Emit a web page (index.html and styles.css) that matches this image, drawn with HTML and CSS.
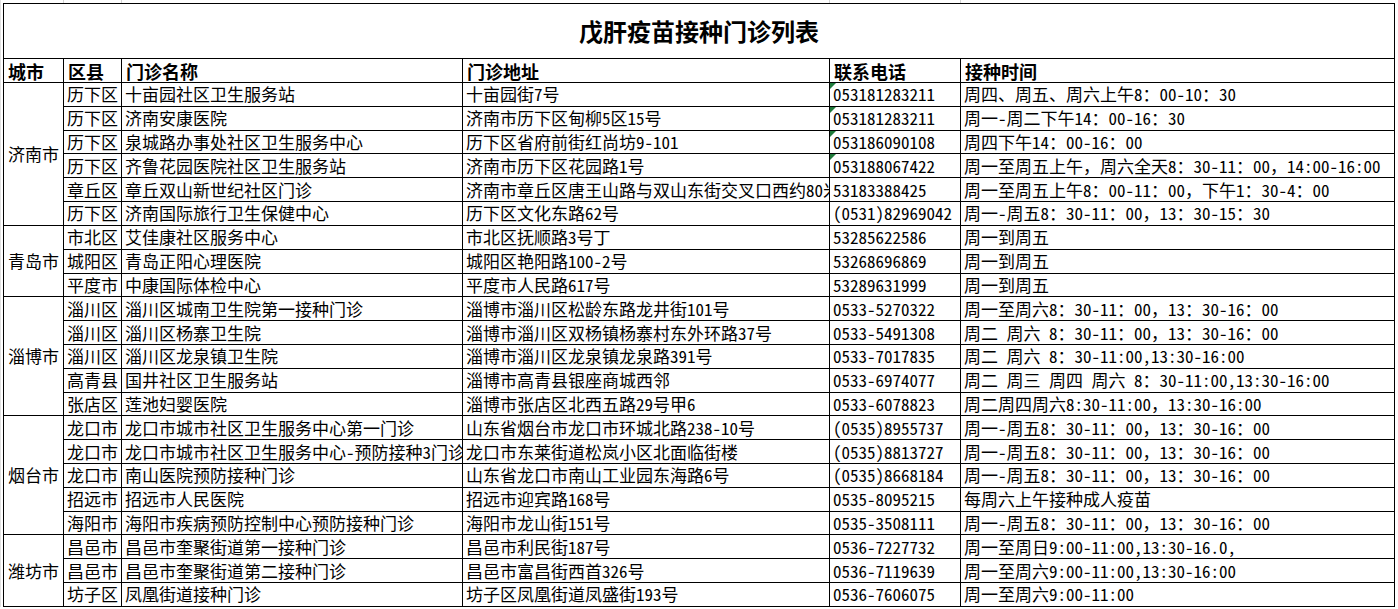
FILE: index.html
```html
<!DOCTYPE html>
<html lang="zh-CN">
<head>
<meta charset="utf-8">
<title>戊肝疫苗接种门诊列表</title>
<link rel="stylesheet" href="styles.css">
</head>
<body>
<div class="sheet">
  <div class="topgrid">
    <span class="g1"></span><span class="g2"></span><span class="g3"></span><span class="g4"></span><span class="g5"></span><span class="g6"></span>
  </div>
  <table class="clinics">
    <colgroup>
      <col class="c-city"><col class="c-dist"><col class="c-name"><col class="c-addr"><col class="c-tel"><col class="c-time">
    </colgroup>
    <tr class="title-row"><td colspan="6" class="title">戊肝疫苗接种门诊列表</td></tr>
    <tr class="head-row">
      <th>城市</th><th>区县</th><th>门诊名称</th><th>门诊地址</th><th>联系电话</th><th>接种时间</th>
    </tr>
    <tr><td rowspan="6" class="city">济南市</td><td>历下区</td><td>十亩园社区卫生服务站</td><td>十亩园街7号</td><td class="warn">053181283211</td><td>周四、周五、周六上午8：00-10：30</td></tr>
    <tr><td>历下区</td><td>济南安康医院</td><td>济南市历下区甸柳5区15号</td><td class="warn">053181283211</td><td>周一-周二下午14：00-16：30</td></tr>
    <tr><td>历下区</td><td>泉城路办事处社区卫生服务中心</td><td>历下区省府前街红尚坊9-101</td><td class="warn">053186090108</td><td>周四下午14：00-16：00</td></tr>
    <tr><td>历下区</td><td>齐鲁花园医院社区卫生服务站</td><td>济南市历下区花园路1号</td><td class="warn">053188067422</td><td>周一至周五上午，周六全天8：30-11：00，14:00-16:00</td></tr>
    <tr><td>章丘区</td><td>章丘双山新世纪社区门诊</td><td>济南市章丘区唐王山路与双山东街交叉口西约80米</td><td>53183388425</td><td>周一至周五上午8：00-11：00，下午1：30-4：00</td></tr>
    <tr><td>历下区</td><td>济南国际旅行卫生保健中心</td><td>历下区文化东路62号</td><td>(0531)82969042</td><td>周一-周五8：30-11：00，13：30-15：30</td></tr>
    <tr><td rowspan="3" class="city">青岛市</td><td>市北区</td><td>艾佳康社区服务中心</td><td>市北区抚顺路3号丁</td><td>53285622586</td><td>周一到周五</td></tr>
    <tr><td>城阳区</td><td>青岛正阳心理医院</td><td>城阳区艳阳路100-2号</td><td>53268696869</td><td>周一到周五</td></tr>
    <tr><td>平度市</td><td>中康国际体检中心</td><td>平度市人民路617号</td><td>53289631999</td><td>周一到周五</td></tr>
    <tr><td rowspan="5" class="city">淄博市</td><td>淄川区</td><td>淄川区城南卫生院第一接种门诊</td><td>淄博市淄川区松龄东路龙井街101号</td><td>0533-5270322</td><td>周一至周六8：30-11：00，13：30-16：00</td></tr>
    <tr><td>淄川区</td><td>淄川区杨寨卫生院</td><td>淄博市淄川区双杨镇杨寨村东外环路37号</td><td>0533-5491308</td><td>周二 周六 8：30-11：00，13：30-16：00</td></tr>
    <tr><td>淄川区</td><td>淄川区龙泉镇卫生院</td><td>淄博市淄川区龙泉镇龙泉路391号</td><td>0533-7017835</td><td>周二 周六 8：30-11:00,13:30-16:00</td></tr>
    <tr><td>高青县</td><td>国井社区卫生服务站</td><td>淄博市高青县银座商城西邻</td><td>0533-6974077</td><td>周二 周三 周四 周六 8：30-11:00,13:30-16:00</td></tr>
    <tr><td>张店区</td><td>莲池妇婴医院</td><td>淄博市张店区北西五路29号甲6</td><td>0533-6078823</td><td>周二周四周六8:30-11:00，13:30-16:00</td></tr>
    <tr><td rowspan="5" class="city">烟台市</td><td>龙口市</td><td>龙口市城市社区卫生服务中心第一门诊</td><td>山东省烟台市龙口市环城北路238-10号</td><td>(0535)8955737</td><td>周一-周五8：30-11：00，13：30-16：00</td></tr>
    <tr><td>龙口市</td><td>龙口市城市社区卫生服务中心-预防接种3门诊</td><td>龙口市东莱街道松岚小区北面临街楼</td><td>(0535)8813727</td><td>周一-周五8：30-11：00，13：30-16：00</td></tr>
    <tr><td>龙口市</td><td>南山医院预防接种门诊</td><td>山东省龙口市南山工业园东海路6号</td><td>(0535)8668184</td><td>周一-周五8：30-11：00，13：30-16：00</td></tr>
    <tr><td>招远市</td><td>招远市人民医院</td><td>招远市迎宾路168号</td><td>0535-8095215</td><td>每周六上午接种成人疫苗</td></tr>
    <tr><td>海阳市</td><td>海阳市疾病预防控制中心预防接种门诊</td><td>海阳市龙山街151号</td><td>0535-3508111</td><td>周一-周五8：30-11：00，13：30-16：00</td></tr>
    <tr><td rowspan="3" class="city">潍坊市</td><td>昌邑市</td><td>昌邑市奎聚街道第一接种门诊</td><td>昌邑市利民街187号</td><td>0536-7227732</td><td>周一至周日9:00-11:00,13:30-16.0,</td></tr>
    <tr><td>昌邑市</td><td>昌邑市奎聚街道第二接种门诊</td><td>昌邑市富昌街西首326号</td><td>0536-7119639</td><td>周一至周六9:00-11:00,13:30-16:00</td></tr>
    <tr><td>坊子区</td><td>凤凰街道接种门诊</td><td>坊子区凤凰街道凤盛街193号</td><td>0536-7606075</td><td>周一至周六9:00-11:00</td></tr>
  </table>
</div>
</body>
</html>
```
FILE: styles.css
```css
html, body {
  margin: 0;
  padding: 0;
  background: #ffffff;
}

body {
  font-family: "Noto Sans Mono CJK SC", "Noto Sans CJK SC", sans-serif;
  color: #000000;
  overflow: hidden;
}

.sheet {
  padding-left: 2px;
  border-left: 1px solid #e2e2e2;
}

.topgrid {
  display: flex;
  height: 3px;
}

.topgrid span {
  box-sizing: border-box;
  height: 3px;
  border-right: 1px solid #d4d4d4;
}

.topgrid .g1 { width: 61px; }
.topgrid .g2 { width: 58px; }
.topgrid .g3 { width: 341px; border-right-color: transparent; }
.topgrid .g4 { width: 367px; }
.topgrid .g5 { width: 131px; }
.topgrid .g6 { width: 434px; border-right-color: transparent; }

.clinics {
  border-collapse: collapse;
  table-layout: fixed;
  width: 1392px;
  font-size: 17px;
  line-height: 20px;
}

.c-city { width: 60px; }
.c-dist { width: 58px; }
.c-name { width: 341px; }
.c-addr { width: 367px; }
.c-tel { width: 131px; }
.c-time { width: 434px; }

.clinics td,
.clinics th {
  box-sizing: border-box;
  border: 1px solid #000000;
  padding: 0 0 0 3px;
  height: 23.818px;
  white-space: nowrap;
  overflow: hidden;
  text-align: left;
  vertical-align: middle;
  font-weight: normal;
}

.clinics .title-row td {
  height: 55px;
  text-align: center;
  font-size: 24px;
  font-weight: bold;
  padding: 0;
}

.clinics .head-row th {
  height: 24px;
  font-size: 18px;
  font-weight: bold;
  vertical-align: bottom;
  padding-bottom: 1px;
  padding-left: 4px;
}

.clinics td.city {
  padding-left: 4px;
}

.clinics td.warn {
  position: relative;
}

.clinics td.warn::before {
  content: "";
  position: absolute;
  left: 0;
  top: 0;
  width: 0;
  height: 0;
  border-top: 6px solid #1f7a3a;
  border-right: 6px solid transparent;
}
```
